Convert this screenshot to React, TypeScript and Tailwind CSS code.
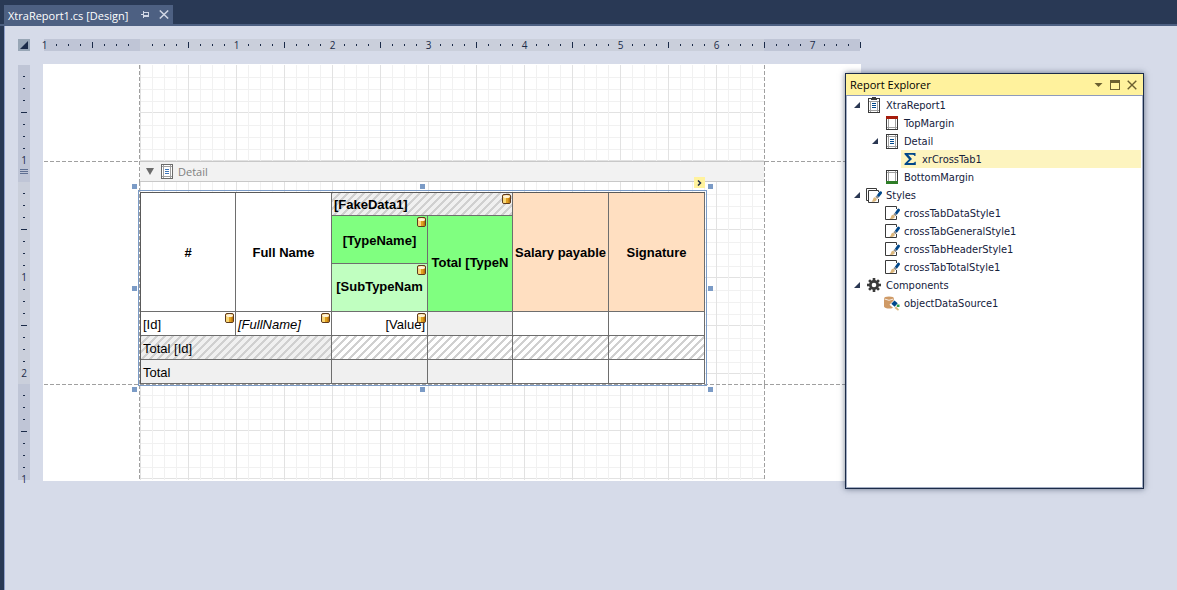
import React from "react";

const INK = "text-[#1b2b48]";
const DASH_H = "bg-[repeating-linear-gradient(90deg,#a0a0a0_0_4px,transparent_4px_6px)]";
const DASH_V = "bg-[repeating-linear-gradient(180deg,#a0a0a0_0_4px,transparent_4px_6px)]";
const GRID =
  "bg-[linear-gradient(90deg,#e2e2e2_0_1px,transparent_1px_12px,#f1f1f1_12px_13px,transparent_13px_24px,#f1f1f1_24px_25px,transparent_25px_36px,#f1f1f1_36px_37px,transparent_37px),linear-gradient(180deg,transparent_0_12px,#f1f1f1_12px_13px,transparent_13px_24px,#f1f1f1_24px_25px,transparent_25px_36px,#f1f1f1_36px_37px,transparent_37px_47px,#e2e2e2_47px_48px)] bg-[length:48px_48px]";
const HATCH =
  "bg-[linear-gradient(135deg,#d0d0d0_0_7%,transparent_7%_43%,#d0d0d0_43%_57%,transparent_57%_93%,#d0d0d0_93%)] bg-[length:8px_8px]";

function HorizontalRuler() {
  const cells = Array.from({ length: 69 }, (_, i) => i);
  return (
    <div className="flex h-3 w-[816px] shrink-0 bg-[linear-gradient(90deg,#bfc5d6_0_96px,#cacfdb_96px_720px,#bfc5d6_720px)]">
      {cells.map((i) => (
        <div key={i} className="flex w-3 shrink-0">
          <div className="flex w-px items-center justify-center">
            {i % 8 === 0 ? (
              i !== 8 && <span className={`text-[10px] leading-3 ${INK}`}>{Math.abs(i / 8 - 1)}</span>
            ) : i % 8 === 4 ? (
              <span className="h-1.5 w-px shrink-0 bg-[#1b2b48]" />
            ) : (
              <span className="h-0.5 w-px shrink-0 bg-[#1b2b48]" />
            )}
          </div>
        </div>
      ))}
    </div>
  );
}

function VerticalTicks({ count }: { count: number }) {
  return (
    <>
      {Array.from({ length: count }, (_, k) => k + 1).map((i) => (
        <div key={i} className="flex h-3 flex-col justify-end">
          <div className="flex h-px items-center justify-center">
            {i % 8 === 0 ? (
              <span className={`pb-0.5 text-[10px] leading-3 ${INK}`}>{i / 8}</span>
            ) : i % 8 === 4 ? (
              <span className="h-px w-1.5 bg-[#1b2b48]" />
            ) : (
              <span className="h-px w-0.5 bg-[#1b2b48]" />
            )}
          </div>
        </div>
      ))}
    </>
  );
}

function VerticalRuler() {
  return (
    <div className="w-3 shrink-0 pt-px">
      <div className="flex h-[117px] flex-col bg-[#bfc5d6]">
        <VerticalTicks count={8} />
        <div className="flex flex-1 flex-col items-center justify-center gap-px">
          <span className="h-px w-2 bg-[#5f6f92]" />
          <span className="h-px w-2 bg-[#5f6f92]" />
          <span className="h-px w-2 bg-[#5f6f92]" />
        </div>
      </div>
      <div className="h-[202px] bg-[#cacfdb]">
        <VerticalTicks count={16} />
      </div>
      <div className="h-24 bg-[#bfc5d6]">
        <VerticalTicks count={8} />
      </div>
    </div>
  );
}

function DbIcon() {
  return (
    <svg className="absolute top-px right-px" width="9" height="10" viewBox="0 0 9 10" aria-hidden="true">
      <path d="M.5 2Q.5 .5 2 .5h5Q8.500.5 8.500 2v6Q8.500 9.500 7 9.500H2Q.5 9.500.5 8z" fill="#e0a020" stroke="#5d3a1e" />
      <path d="M1 3.500h3v5.500H2q-1 0-1-1z" fill="#f9d878" />
      <path d="M6.500 3.500H8V8q0 1-1.500 1z" fill="#b87410" />
      <ellipse cx="4.500" cy="2.400" rx="3.500" ry="1.500" fill="#fff3d8" />
    </svg>
  );
}

type CellProps = {
  children?: React.ReactNode;
  className?: string;
  bound?: boolean;
  head?: boolean;
  raised?: boolean;
  colSpan?: number;
  rowSpan?: number;
};

function Cell({ children, className = "", bound, head, raised, colSpan, rowSpan }: CellProps) {
  const Tag = head ? "th" : "td";
  return (
    <Tag
      colSpan={colSpan}
      rowSpan={rowSpan}
      className={`relative overflow-hidden border-r border-b border-[#6e6e6e] px-0.5 whitespace-nowrap ${raised ? "pt-0 pb-0.5" : "pt-0.5 pb-0"} ${className}`}
    >
      {children}
      {bound && <DbIcon />}
    </Tag>
  );
}

function CrossTab() {
  return (
    <table className="w-[565px] table-fixed border-separate border-spacing-0 border-t border-l border-[#5a5a5a] bg-white font-['Liberation_Sans',Arial,sans-serif] text-[13px] leading-4 text-black">
      <colgroup>
        <col className="w-[95px]" />
        <col className="w-24" />
        <col className="w-24" />
        <col className="w-[85px]" />
        <col className="w-24" />
        <col className="w-24" />
      </colgroup>
      <tbody>
        <tr className="h-[23px]">
          <Cell head rowSpan={3}>#</Cell>
          <Cell head rowSpan={3}>Full Name</Cell>
          <Cell head bound colSpan={2} className={`bg-[#f0f0f0] text-left ${HATCH}`}>[FakeData1]</Cell>
          <Cell head rowSpan={3} className="bg-[#ffdfc1]">Salary payable</Cell>
          <Cell head rowSpan={3} className="bg-[#ffdfc1]">Signature</Cell>
        </tr>
        <tr className="h-12">
          <Cell head bound className="bg-[#80ff80]">[TypeName]</Cell>
          <Cell head raised rowSpan={2} className="bg-[#80ff80]">Total [TypeN</Cell>
        </tr>
        <tr className="h-12">
          <Cell head raised bound className="bg-[#c0ffc0]">[SubTypeNam</Cell>
        </tr>
        <tr className="h-6">
          <Cell bound>[Id]</Cell>
          <Cell bound className="italic">[FullName]</Cell>
          <Cell bound className="text-right">[Value]</Cell>
          <Cell className="bg-[#f0f0f0]" />
          <Cell />
          <Cell />
        </tr>
        <tr className="h-6">
          <Cell colSpan={2} className={`bg-[#f0f0f0] ${HATCH}`}>Total [Id]</Cell>
          <Cell className={HATCH} />
          <Cell className={HATCH} />
          <Cell className={HATCH} />
          <Cell className={HATCH} />
        </tr>
        <tr className="h-6">
          <Cell colSpan={2} className="bg-[#f0f0f0]">Total</Cell>
          <Cell className="bg-[#f0f0f0]" />
          <Cell className="bg-[#f0f0f0]" />
          <Cell />
          <Cell />
        </tr>
      </tbody>
    </table>
  );
}

function SelectedCrossTab() {
  const handle = "absolute size-[5px] bg-[#7b9bc6]";
  return (
    <div className="relative z-10 -ml-0.5 w-fit border border-[#7b9bc6] p-px">
      <CrossTab />
      <span className={`${handle} -top-[7px] -left-[7px]`} />
      <span className={`${handle} -top-[7px] left-1/2 -ml-[3px]`} />
      <span className={`${handle} -top-[7px] -right-[7px]`} />
      <span className={`${handle} top-1/2 -left-[7px] -mt-0.5`} />
      <span className={`${handle} top-1/2 -right-[7px] -mt-0.5`} />
      <span className={`${handle} -bottom-[7px] -left-[7px]`} />
      <span className={`${handle} -bottom-[7px] left-1/2 -ml-[3px]`} />
      <span className={`${handle} -right-[7px] -bottom-[7px]`} />
      <button
        type="button"
        aria-label="Tasks"
        className="absolute -top-3.5 right-px flex size-[11px] items-center justify-center bg-[#fff29d]"
      >
        <svg width="5" height="6" viewBox="0 0 5 6" aria-hidden="true">
          <path d="M1 .5 3.500 3 1 5.500" fill="none" stroke="#1b2b48" strokeWidth="1.500" />
        </svg>
      </button>
    </div>
  );
}

function BandIcon({ dim }: { dim?: boolean }) {
  const frame = dim ? "#6b6b6b" : "#3a3a3a";
  const bar = dim ? "#3d74b8" : "#00478a";
  return (
    <svg width="12" height="15" viewBox="0 0 12 15" aria-hidden="true" shapeRendering="crispEdges">
      <rect x=".5" y=".5" width="11" height="14" fill="#fff" stroke={frame} />
      <path d="M2.500 1v13M9.500 1v13M1 2.500h10M1 12.500h10" stroke="#a0a0a0" />
      <path d="M4 5h4v1h-4zM4 7h4v1h-4zM4 9h4v1h-4z" fill={bar} />
    </svg>
  );
}

function Paper() {
  return (
    <div className="h-fit w-[818px] shrink-0 bg-white p-px">
      <div className="flex h-24">
        <div className="w-[95px]" />
        <div className={`w-px ${DASH_V}`} />
        <div className={`flex-1 ${GRID}`} />
        <div className={`w-px ${DASH_V}`} />
        <div className="w-[95px]" />
      </div>
      <div className="flex h-[21px]">
        <div className={`h-px w-[95px] ${DASH_H}`} />
        <div className={`w-px ${DASH_V}`} />
        <button
          type="button"
          className="flex flex-1 items-center border-y border-[#c8c8c8] bg-[#f2f2f2] pl-1.5 text-left"
        >
          <svg width="8" height="7" viewBox="0 0 8 7" aria-hidden="true">
            <path d="M0 0h8L4 7z" fill="#6b6b6b" />
          </svg>
          <span className="ml-[7px]">
            <BandIcon dim />
          </span>
          <span className="ml-[5px] font-['Open_Sans',sans-serif] text-[11px] leading-4 text-[#808080]">Detail</span>
        </button>
        <div className={`w-px ${DASH_V}`} />
        <div className={`h-px w-[95px] ${DASH_H}`} />
      </div>
      <div className="flex h-[202px]">
        <div className="w-[95px]" />
        <div className={`w-px ${DASH_V}`} />
        <div className={`flex-1 pt-2 ${GRID}`}>
          <SelectedCrossTab />
        </div>
        <div className={`w-px ${DASH_V}`} />
        <div className="w-[95px]" />
      </div>
      <div className={`h-px ${DASH_H}`} />
      <div className="flex h-[95px]">
        <div className="w-[95px]" />
        <div className={`w-px ${DASH_V}`} />
        <div className={`flex-1 bg-[position:0_-2px] ${GRID}`} />
        <div className={`w-px ${DASH_V}`} />
        <div className="w-[95px]" />
      </div>
    </div>
  );
}

function ReportIcon() {
  return (
    <svg width="12" height="16" viewBox="0 0 12 16" aria-hidden="true" shapeRendering="crispEdges">
      <rect x=".5" y="1.500" width="11" height="14" fill="#fff" stroke="#3a3a3a" />
      <path d="M2.500 4v11M9.500 4v11M1 13.500h10M1 4.500h10" stroke="#a0a0a0" />
      <path d="M3 1h1V0h4v1h1v2H3z" fill="#3a3a3a" />
      <path d="M4 6h4v1h-4zM4 8h4v1h-4zM4 10h4v1h-4z" fill="#00478a" />
    </svg>
  );
}

function MarginIcon({ bottom }: { bottom?: boolean }) {
  return (
    <svg width="12" height="14" viewBox="0 0 12 14" aria-hidden="true" shapeRendering="crispEdges">
      <rect x=".5" y=".5" width="11" height="13" fill="#fff" stroke="#3a3a3a" />
      <path d={bottom ? "M2.500 1v10M9.500 1v10M1 2.500h10" : "M2.500 3v10M9.500 3v10M1 11.500h10"} stroke="#a0a0a0" />
      <rect y={bottom ? 11 : 0} width="12" height="3" fill={bottom ? "#2e7d27" : "#a61c0c"} />
    </svg>
  );
}

function SumIcon() {
  return (
    <svg width="12" height="12" viewBox="0 0 12 12" aria-hidden="true">
      <path d="M.5 0h11v3h-1q-.3-1.200-2-1.200H4.200L8 6l-4.200 4H8.700q1.800 0 2.100-1.300h1V12H.5v-1.200L5 6.200.5 1.200z" fill="#00478a" />
    </svg>
  );
}

function Brush() {
  return (
    <>
      <path d="M4.500 13q1.300-.8 1.600-2.600.5-2 2.300-1.600l1.400 1.400q.4 1.900-1.900 2.600-1.600.4-3.400.2z" fill="#dcb67a" />
      <path d="M8.400 8.200 9.900 6.700l2 2-1.500 1.500z" fill="#8a8a8a" />
      <path d="M9.900 6.700 12.300 3.200q1-1.100 2.100-.3t.3 2.200L11.900 8.700z" fill="#00478a" />
    </>
  );
}

function StyleIcon() {
  return (
    <svg width="15" height="14" viewBox="0 0 15 14" aria-hidden="true">
      <path d="M11.500 3V.5H.5v13h11V10" fill="none" stroke="#3a3a3a" />
      <Brush />
    </svg>
  );
}

function StylesIcon() {
  return (
    <svg width="16" height="15" viewBox="0 0 16 15" aria-hidden="true">
      <path d="M10.500 2V.5H.5V12.500H2.500M12.500 4V2.500h-10v12h10V11" fill="none" stroke="#3a3a3a" />
      <g transform="translate(1 .6)">
        <Brush />
      </g>
    </svg>
  );
}

function GearIcon() {
  return (
    <svg width="14" height="14" viewBox="0 0 14 14" aria-hidden="true">
      <g fill="#3a3a3a">
        {[0, 45, 90, 135].map((a) => (
          <rect key={a} x="5.700" y="0" width="2.600" height="14" transform={`rotate(${a} 7 7)`} />
        ))}
        <circle cx="7" cy="7" r="5" />
      </g>
      <circle cx="7" cy="7" r="2.300" fill="#fff" />
    </svg>
  );
}

function DataSourceIcon() {
  return (
    <svg width="16" height="15" viewBox="0 0 16 15" aria-hidden="true">
      <path d="M0 2.500v8C0 13 10 13.500 10 10.500v-8z" fill="#cf9a66" />
      <ellipse cx="5" cy="2.500" rx="5" ry="2" fill="#cf9a66" />
      <path d="M.5 3q4.500 2.600 9 0" fill="none" stroke="#fff" strokeWidth=".8" />
      <path d="M10.500 3.500 16 8.500 12 14.500 5.500 8.800z" fill="#fff" />
      <path d="M10.500 4.500 13.700 7.300 10.700 10.700 7.300 7.800z" fill="#00478a" />
      <path d="M12.800 8.500H15.500v2.500h-2.700z" fill="#2e9e4f" />
      <path d="M10.500 12l1.500-1.500 3 3-1 1.200z" fill="#dcb67a" />
    </svg>
  );
}

type Node = { label: string; icon: React.ReactNode; level: number; open?: boolean; selected?: boolean };

const nodes: Node[] = [
  { label: "XtraReport1", icon: <ReportIcon />, level: 0, open: true },
  { label: "TopMargin", icon: <MarginIcon />, level: 1 },
  { label: "Detail", icon: <BandIcon />, level: 1, open: true },
  { label: "xrCrossTab1", icon: <SumIcon />, level: 2, selected: true },
  { label: "BottomMargin", icon: <MarginIcon bottom />, level: 1 },
  { label: "Styles", icon: <StylesIcon />, level: 0, open: true },
  { label: "crossTabDataStyle1", icon: <StyleIcon />, level: 1 },
  { label: "crossTabGeneralStyle1", icon: <StyleIcon />, level: 1 },
  { label: "crossTabHeaderStyle1", icon: <StyleIcon />, level: 1 },
  { label: "crossTabTotalStyle1", icon: <StyleIcon />, level: 1 },
  { label: "Components", icon: <GearIcon />, level: 0, open: true },
  { label: "objectDataSource1", icon: <DataSourceIcon />, level: 1 },
];

const indents = ["pl-0", "pl-[18px]", "pl-9"];

function TreeRow({ node }: { node: Node }) {
  return (
    <li role="treeitem" aria-level={node.level + 1} aria-selected={!!node.selected} className={`flex h-[18px] ${indents[node.level]}`}>
      <span className="flex w-[18px] shrink-0 items-center justify-center pl-0.5">
        {node.open && (
          <svg width="6" height="6" viewBox="0 0 6 6" aria-hidden="true">
            <path d="M6 0v6H0z" fill="#2a3752" />
          </svg>
        )}
      </span>
      <span className={`flex flex-1 items-center ${node.selected ? "bg-[#fdf4bf]" : ""}`}>
        <span className="flex w-[18px] shrink-0 items-center justify-center">{node.icon}</span>
        <span className="pt-0.5 pl-[3px]">{node.label}</span>
      </span>
    </li>
  );
}

function ReportExplorer() {
  return (
    <section className="absolute top-[73px] left-[845px] z-20 flex h-[416px] w-[299px] flex-col border border-[#1b2b48] bg-white shadow-[0_0_6px_rgba(27,43,72,0.6)]">
      <header className="flex h-[22px] items-center border-b border-[#8e9bbc] bg-[#fff29d] pr-1.5 pl-1">
        <h2 className="flex-1 font-['Open_Sans',sans-serif] text-[11px] leading-4 text-black">Report Explorer</h2>
        <div className="flex items-center gap-[7px] text-[#6b6030]">
          <button type="button" aria-label="Window position">
            <svg width="9" height="10" viewBox="0 0 9 10" aria-hidden="true">
              <path d="M.5 3h8l-4 4z" fill="currentColor" />
            </svg>
          </button>
          <button type="button" aria-label="Maximize">
            <svg width="10" height="10" viewBox="0 0 10 10" aria-hidden="true" shapeRendering="crispEdges">
              <path d="M.5 1v8.500h9V1" fill="none" stroke="currentColor" />
              <path d="M0 0h10v3H0z" fill="currentColor" />
            </svg>
          </button>
          <button type="button" aria-label="Close">
            <svg width="10" height="10" viewBox="0 0 10 10" aria-hidden="true">
              <path d="M.7.7l8.600 8.600M9.300.7.7 9.300" stroke="currentColor" strokeWidth="1.400" />
            </svg>
          </button>
        </div>
      </header>
      <ul role="tree" className="flex-1 border-x border-b border-[#a4aec4] pr-px font-['DejaVu_Sans_Condensed','DejaVu_Sans',sans-serif] text-[11px] leading-4 text-[#14213c]">
        {nodes.map((n) => (
          <TreeRow key={n.label} node={n} />
        ))}
      </ul>
    </section>
  );
}

function DocumentTabs() {
  return (
    <div className="flex h-[26px] items-end border-b-2 border-[#4d6082] bg-[#293955] pl-1">
      <div className="flex h-[19px] items-center bg-[#4d6082] px-1 text-white">
        <button type="button" className="pt-0.5 font-['Open_Sans',sans-serif] text-[11px] leading-4">
          XtraReport1.cs [Design]
        </button>
        <button type="button" aria-label="Pin" className="ml-[13px]">
          <svg width="8" height="7" viewBox="0 0 8 7" aria-hidden="true" shapeRendering="crispEdges" className="text-[#d0d6e4]">
            <path d="M0 3.500h3M2.500 0v7M3 1.500h4.500v4H3M3 4.500h4" fill="none" stroke="currentColor" />
          </svg>
        </button>
        <button type="button" aria-label="Close" className="ml-2.5">
          <svg width="10" height="9" viewBox="0 0 10 9" aria-hidden="true" className="text-[#d0d6e4]">
            <path d="M.8.5l8.400 8M9.200.5l-8.400 8" stroke="currentColor" strokeWidth="1.500" />
          </svg>
        </button>
      </div>
    </div>
  );
}

export default function App() {
  return (
    <div className="relative flex min-h-screen flex-col overflow-hidden bg-[#293955] font-['Open_Sans',sans-serif]">
      <DocumentTabs />
      <main className="ml-1 flex-1 border-l border-[#8e9fca] bg-[#d6dbe9] pt-[13px] pl-[13px]">
        <div className="flex gap-3.5">
          <div className="flex size-3 shrink-0 items-center justify-center bg-[#98a6b6]">
            <svg width="8" height="8" viewBox="0 0 8 8" aria-hidden="true">
              <path d="M8 0v8H0z" fill="#1b2b48" />
            </svg>
          </div>
          <HorizontalRuler />
        </div>
        <div className="mt-[13px] flex gap-[13px]">
          <VerticalRuler />
          <Paper />
        </div>
      </main>
      <ReportExplorer />
    </div>
  );
}
